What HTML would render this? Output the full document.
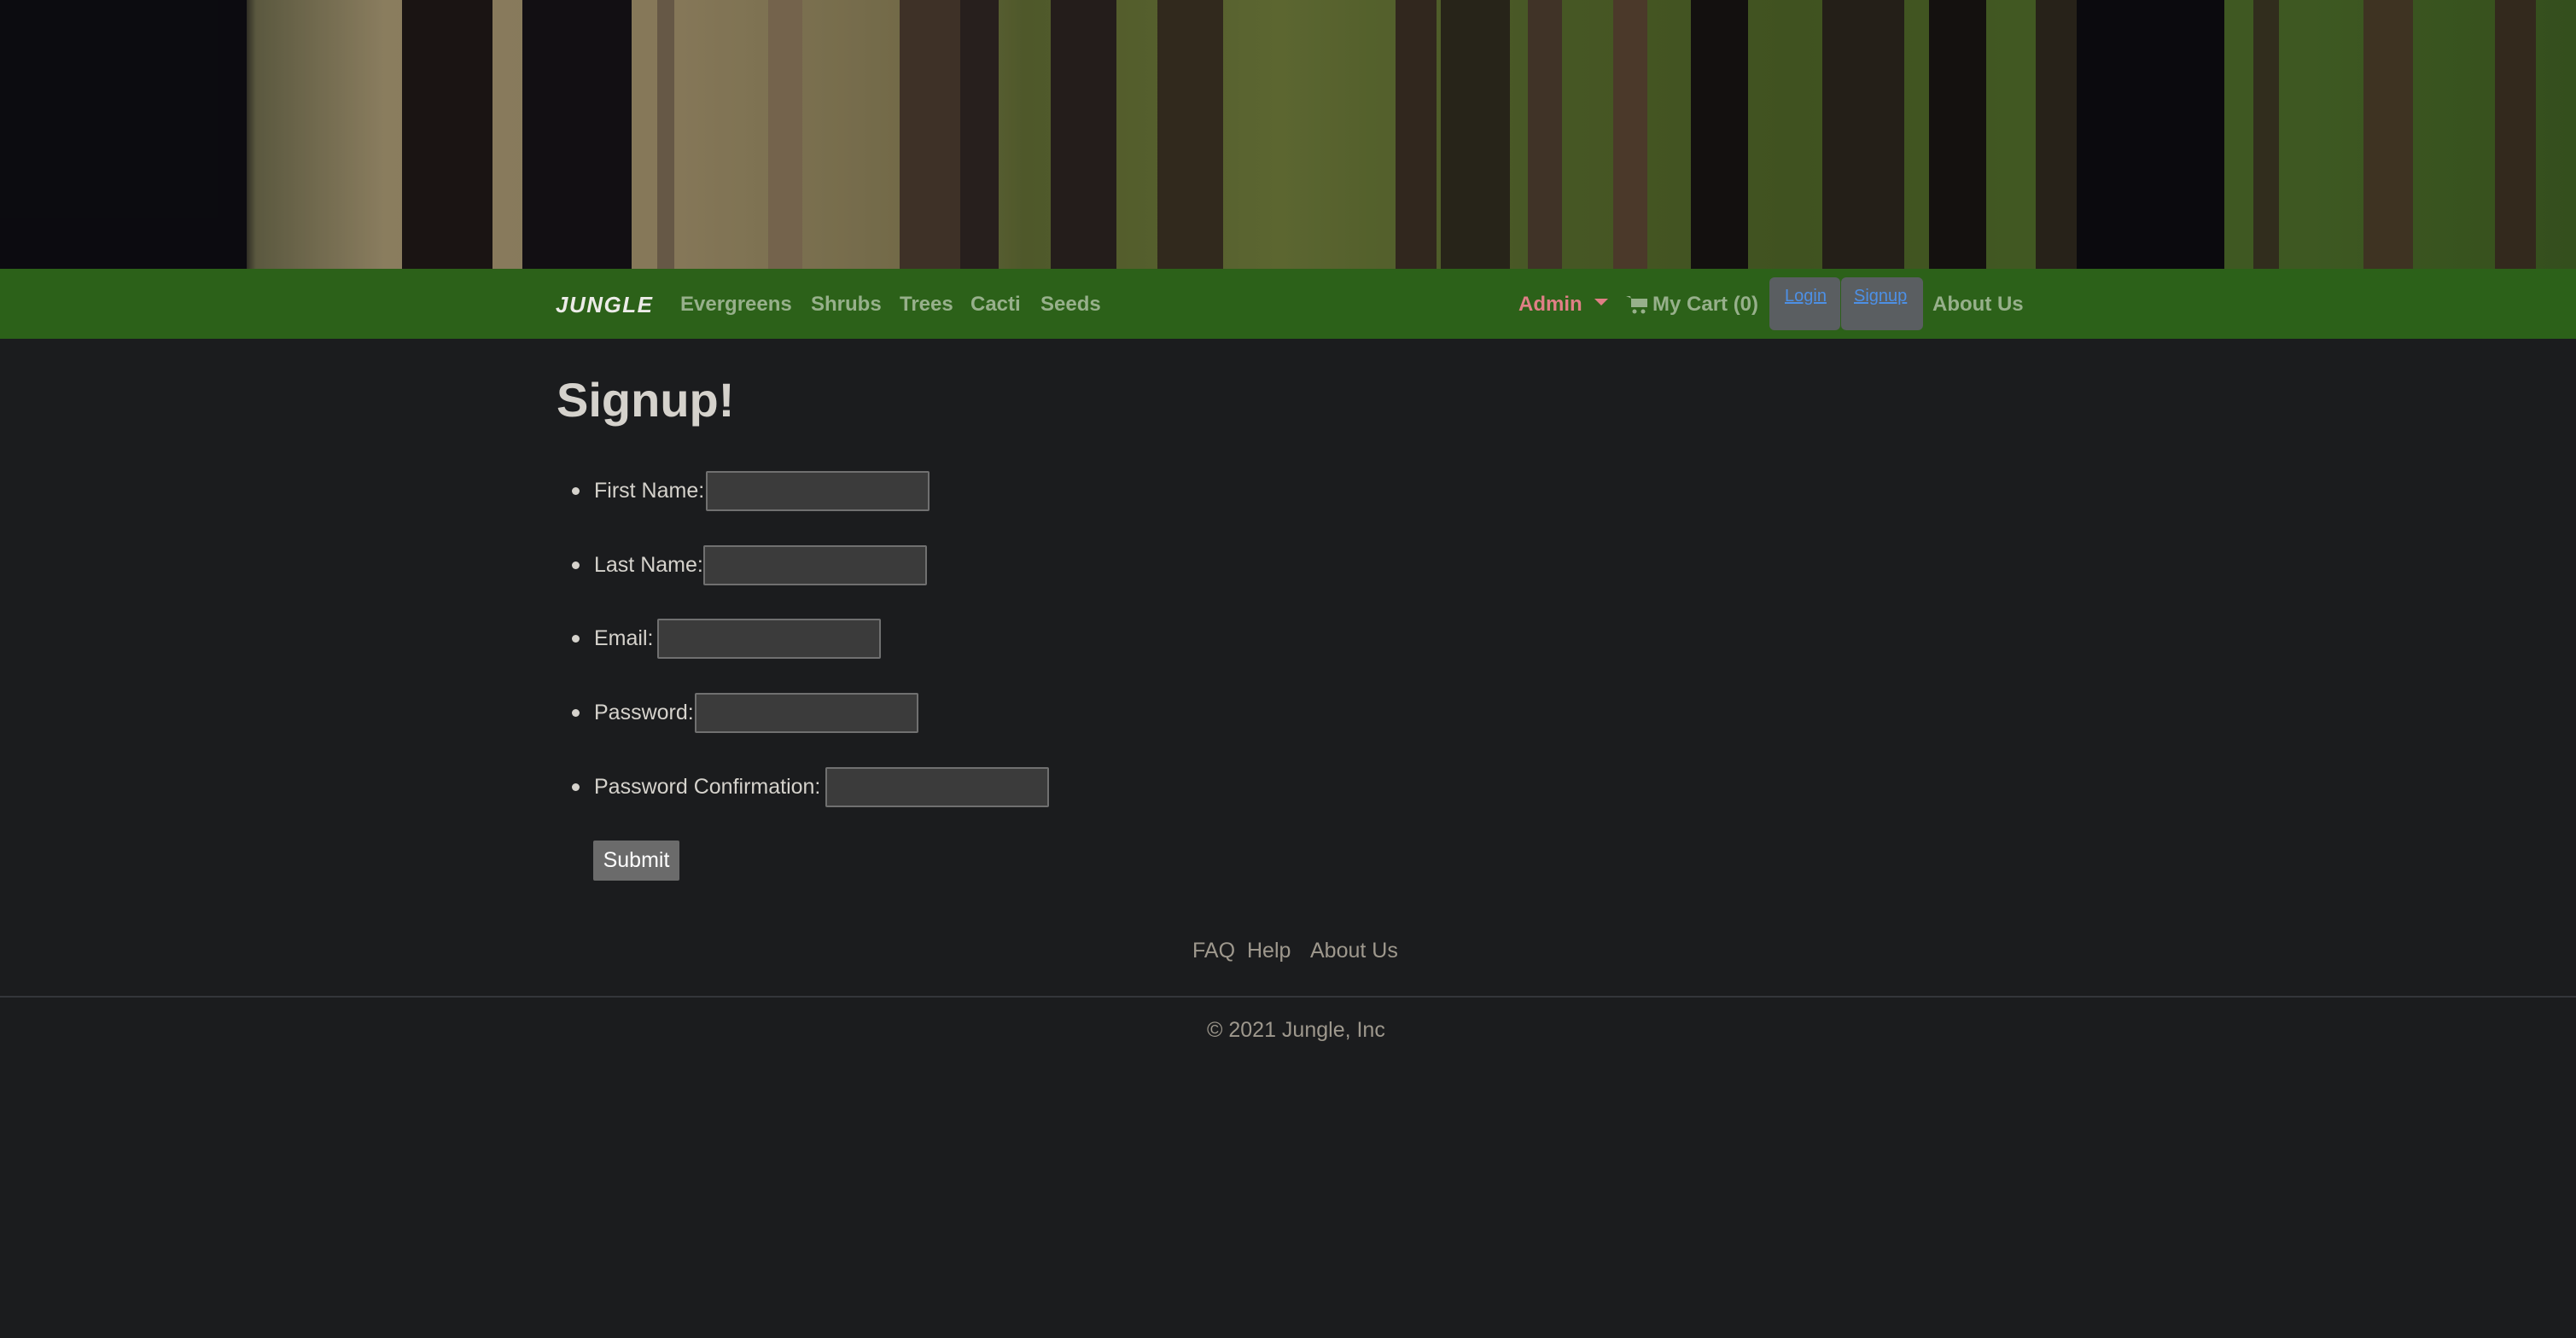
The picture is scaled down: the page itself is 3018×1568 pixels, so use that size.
<!DOCTYPE html>
<html><head><meta charset="utf-8">
<style>
*{margin:0;padding:0;box-sizing:border-box}
html,body{width:3018px;height:1568px;background:#1b1c1e;overflow:hidden;font-family:"Liberation Sans",sans-serif}
.hero{position:absolute;left:0;top:0;width:3018px;height:315px;overflow:hidden;
background:linear-gradient(90deg,#0e0d10 0px,#0e0d10 280px,#6d6a4a 300px,#a69670 450px,#a08f68 800px,#8a7f55 1050px,#5e6a30 1200px,#6e7a38 1500px,#55692a 1800px,#4c6224 2100px,#4e6a26 2400px,#4a6a26 2700px,#3e5e20 3018px)}
.hero:after{content:"";position:absolute;left:0;top:0;right:0;bottom:0;background:rgba(10,10,15,0.18)}
.t{position:absolute;top:0;height:315px}
.nav{position:absolute;left:0;top:315px;width:3018px;height:82px;background:#2c6119}
.nav span{position:absolute;font-weight:bold;font-size:24px;color:#97b08b;top:28px;white-space:nowrap}
.box{position:absolute;top:10px;height:62px;background:#5a5e61;border-radius:6px}
.box a{position:absolute;top:11px;font-size:20px;color:#4d90e6;text-decoration:underline}
h1{position:absolute;left:652px;top:441px;font-weight:bold;font-size:56px;line-height:56px;color:#d5d2cc}
.row{position:absolute;left:670px;height:47px;display:flex;align-items:center;font-size:25px;color:#d5d2cc;white-space:nowrap}
.row b{display:inline-block;width:9px;height:9px;border-radius:50%;background:#d5d2cc;margin-right:17px}
.inp{position:absolute;top:0;width:262px;height:47px;background:#3b3b3b;border:2px solid #707070;border-radius:2px}
.btn{position:absolute;left:695px;top:985px;width:101px;height:47px;background:#6b6b6b;border-radius:2px;color:#fff;font-size:25px;text-align:center;line-height:47px}
.foot{position:absolute;font-size:25px;color:#9e988d;white-space:nowrap}
.hr{position:absolute;left:0;top:1167px;width:3018px;height:2px;background:#34363a}
</style></head><body>
<div class="hero">
<div class="t" style="left:0;width:289px;background:#0d0c10"></div>
<div class="t" style="left:471px;width:106px;background:#1e1714"></div>
<div class="t" style="left:612px;width:128px;background:#141014"></div>
<div class="t" style="left:770px;width:20px;background:#7a6a52"></div>
<div class="t" style="left:900px;width:40px;background:#8b775a"></div>
<div class="t" style="left:1054px;width:71px;background:#4a3a2c"></div>
<div class="t" style="left:1125px;width:45px;background:#2e2420"></div>
<div class="t" style="left:1231px;width:77px;background:#2a221e"></div>
<div class="t" style="left:1356px;width:77px;background:#3a3020"></div>
<div class="t" style="left:1635px;width:48px;background:#3a2e22"></div>
<div class="t" style="left:1688px;width:81px;background:#2e2a1c"></div>
<div class="t" style="left:1790px;width:40px;background:#4c3c2c"></div>
<div class="t" style="left:1890px;width:40px;background:#5a4430"></div>
<div class="t" style="left:1981px;width:67px;background:#15120f"></div>
<div class="t" style="left:2135px;width:96px;background:#2a241a"></div>
<div class="t" style="left:2260px;width:67px;background:#16130f"></div>
<div class="t" style="left:2385px;width:48px;background:#2e281c"></div>
<div class="t" style="left:2433px;width:173px;background:#0b0a0e"></div>
<div class="t" style="left:2640px;width:30px;background:#3a3520"></div>
<div class="t" style="left:2769px;width:58px;background:#4a3c26"></div>
<div class="t" style="left:2923px;width:48px;background:#3c3020"></div>
</div>
<div class="nav">
<span style="left:651px;color:#ecebe8;font-style:italic;font-weight:900;font-size:26px;letter-spacing:1.5px;top:27px">JUNGLE</span>
<span style="left:797px">Evergreens</span>
<span style="left:950px">Shrubs</span>
<span style="left:1054px">Trees</span>
<span style="left:1137px">Cacti</span>
<span style="left:1219px">Seeds</span>
<span style="left:1779px;color:#e07f86">Admin</span>
<div style="position:absolute;left:1868px;top:35px;width:0;height:0;border-left:8px solid transparent;border-right:8px solid transparent;border-top:8px solid #e07f86"></div>
<svg style="position:absolute;left:1905px;top:30px" width="26" height="24" viewBox="0 0 26 24"><path d="M0 2h5l4 13h13l3-10H7" fill="#97b08b"/><rect x="6" y="5" width="19" height="10" fill="#97b08b"/><circle cx="10" cy="20" r="2.5" fill="#97b08b"/><circle cx="20" cy="20" r="2.5" fill="#97b08b"/></svg>
<span style="left:1936px">My Cart (0)</span>
<div class="box" style="left:2073px;width:83px"><a style="left:18px">Login</a></div>
<div class="box" style="left:2157px;width:96px"><a style="left:15px">Signup</a></div>
<span style="left:2264px">About Us</span>
</div>
<h1>Signup!</h1>
<div class="row" style="top:552px"><b></b>First Name:</div><div class="inp" style="left:827px;top:552px"></div>
<div class="row" style="top:639px"><b></b>Last Name:</div><div class="inp" style="left:824px;top:639px"></div>
<div class="row" style="top:725px"><b></b>Email:</div><div class="inp" style="left:770px;top:725px"></div>
<div class="row" style="top:812px"><b></b>Password:</div><div class="inp" style="left:814px;top:812px"></div>
<div class="row" style="top:899px"><b></b>Password Confirmation:</div><div class="inp" style="left:967px;top:899px"></div>
<div class="btn">Submit</div>
<div class="foot" style="left:1397px;top:1100px">FAQ</div>
<div class="foot" style="left:1461px;top:1100px">Help</div>
<div class="foot" style="left:1535px;top:1100px">About Us</div>
<div class="hr"></div>
<div class="foot" style="left:1414px;top:1193px">© 2021 Jungle, Inc</div>
</body></html>
